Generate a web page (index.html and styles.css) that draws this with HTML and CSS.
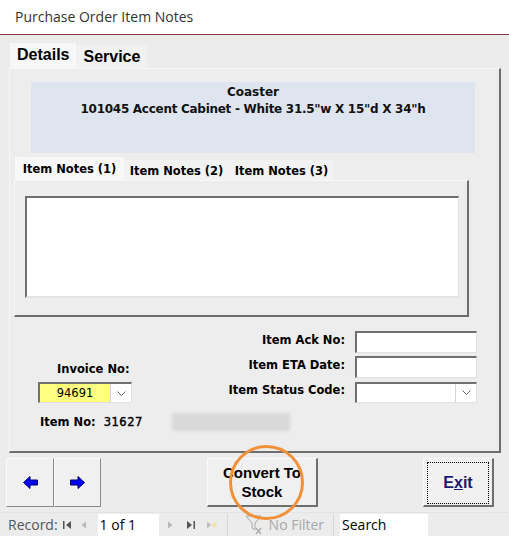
FILE: index.html
```html
<!DOCTYPE html>
<html>
<head>
  <meta charset="UTF-8">
  <title>Purchase Order Item Notes</title>
  <link rel="stylesheet" href="styles.css">
</head>
<body>
  <div class="window">
    <header class="titlebar">Purchase Order Item Notes</header>

    <main class="form">
      <nav class="tabs">
        <span class="tab active">Details</span>
        <span class="tab">Service</span>
      </nav>

      <section class="tab-panel">
        <div class="item-head">
          <div>Coaster</div>
          <div class="item-desc">101045 Accent Cabinet - White 31.5"w X 15"d X 34"h</div>
        </div>

        <nav class="note-tabs">
          <span class="note-tab active">Item Notes (1)</span>
          <span class="note-tab">Item Notes (2)</span>
          <span class="note-tab">Item Notes (3)</span>
        </nav>
        <div class="note-panel">
          <div class="note-box"></div>
        </div>

        <div class="fields">
          <div class="invoice">
            <label class="invoice-label">Invoice No:</label>
            <div class="combo">
              <span class="combo-value yellow">94691</span>
              <span class="combo-btn">
                <svg width="9" height="5" viewBox="0 0 9 5"><path d="M0.5 0.5 L4.5 4.5 L8.5 0.5" fill="none" stroke="#666" stroke-width="1"/></svg>
              </span>
            </div>
          </div>

          <div class="field-grid">
            <label>Item Ack No:</label>
            <div class="textbox"></div>
            <label>Item ETA Date:</label>
            <div class="textbox"></div>
            <label>Item Status Code:</label>
            <div class="combo wide">
              <span class="combo-value"></span>
              <span class="combo-btn">
                <svg width="9" height="5" viewBox="0 0 9 5"><path d="M0.5 0.5 L4.5 4.5 L8.5 0.5" fill="none" stroke="#666" stroke-width="1"/></svg>
              </span>
            </div>
          </div>
        </div>

        <div class="item-no">
          <span>Item No:</span>
          <span class="item-no-value">31627</span>
          <span class="blurred"></span>
        </div>
      </section>

      <div class="actions">
        <div class="nav-buttons">
          <button class="btn nav-btn" title="Previous">
            <svg width="15" height="13" viewBox="0 0 15 13"><polygon points="0.5,6.5 7,0.5 7,4 14.5,4 14.5,9 7,9 7,12.5" fill="#0000ff" stroke="#000066" stroke-width="1"/></svg>
          </button>
          <button class="btn nav-btn" title="Next">
            <svg width="15" height="13" viewBox="0 0 15 13"><polygon points="14.5,6.5 8,0.5 8,4 0.5,4 0.5,9 8,9 8,12.5" fill="#0000ff" stroke="#000066" stroke-width="1"/></svg>
          </button>
        </div>
        <button class="btn convert-btn">Convert To<br>Stock</button>
        <button class="btn exit-btn"><span class="focus-rect">E<u>x</u>it</span></button>
      </div>
    </main>

    <footer class="record-bar">
      <span class="record-label">Record:</span>
      <span class="rec-icon rec-first">
        <svg width="9" height="10" viewBox="0 0 9 10"><rect x="0" y="1" width="1.5" height="8" fill="#555"/><polygon points="8,1 8,9 3,5" fill="#555"/></svg>
      </span>
      <span class="rec-icon rec-prev">
        <svg width="6" height="10" viewBox="0 0 6 10"><polygon points="5,1.5 5,8.5 0.5,5" fill="#b8b8b8"/></svg>
      </span>
      <span class="rec-box">1 of 1</span>
      <span class="rec-icon rec-next">
        <svg width="6" height="10" viewBox="0 0 6 10"><polygon points="1,1.5 1,8.5 5.5,5" fill="#b8b8b8"/></svg>
      </span>
      <span class="rec-icon rec-last">
        <svg width="10" height="10" viewBox="0 0 10 10"><polygon points="1,1 1,9 6,5" fill="#555"/><rect x="7.5" y="1" width="1.5" height="8" fill="#555"/></svg>
      </span>
      <span class="rec-icon rec-new">
        <svg width="11" height="10" viewBox="0 0 11 10"><polygon points="1,1.5 1,8.5 5.5,5" fill="#c0c0c0"/><path d="M8.5 2.5 V7.5 M6 5 H11 M6.8 3.2 L10.2 6.8 M10.2 3.2 L6.8 6.8" stroke="#f3e08a" stroke-width="1"/></svg>
      </span>
      <span class="rec-sep"></span>
      <span class="filter">
        <svg width="22" height="22" viewBox="0 0 22 22"><path d="M1 2 H16 L10 9 V16 L7 14 V9 Z" fill="none" stroke="#a8a8a8" stroke-width="1"/><path d="M11 14 L16 20 M16 14 L11 20" stroke="#a8a8a8" stroke-width="1.2"/></svg>
        No Filter
      </span>
      <span class="rec-sep search-sep"></span>
      <span class="search-box">Search</span>
    </footer>

    <div class="highlight-ring"></div>
  </div>
</body>
</html>
```

FILE: styles.css
```css
body {
  margin: 0;
  background-color: #ececec;
}

.window {
  position: relative;
  width: 509px;
  height: 536px;
  overflow: hidden;
  background-color: #ececec;
  font-family: "DejaVu Sans", sans-serif;
  color: #000;
}

.titlebar {
  height: 34px;
  line-height: 34px;
  padding-left: 15px;
  background-color: #fff;
  border-bottom: 1px solid #8e3946;
  font-family: "Open Sans", sans-serif;
  font-size: 14px;
  color: #333;
}

.form {
  padding-top: 8px;
}

/* top tabs */
.tabs {
  display: flex;
  align-items: flex-end;
  margin-left: 10px;
  height: 25px;
}

.tab {
  font-family: "Liberation Sans", Arial, sans-serif;
  font-weight: bold;
  font-size: 16px;
  padding: 0 7px;
  height: 23px;
  line-height: 23px;
  background-color: #f1f1f1;
}

.tab.active {
  height: 25px;
  line-height: 23px;
  background-color: #f7f7f7;
}

.tab-panel {
  box-sizing: border-box;
  margin-left: 9px;
  width: 492px;
  height: 385px;
  background-color: #ededed;
  border-top: 1px solid #f7f7f7;
  border-left: 1px solid #f7f7f7;
  border-right: 2px solid #6e6e6e;
  border-bottom: 2px solid #6e6e6e;
}

.item-head {
  margin: 13px 24px 0 21px;
  height: 71px;
  padding-top: 2px;
  box-sizing: border-box;
  background-color: #dfe5ee;
  text-align: center;
  font-weight: bold;
  font-size: 12px;
  line-height: 17px;
  color: #111;
}

.item-desc {
  letter-spacing: -0.28px;
}

/* item notes tabs */
.note-tabs {
  display: flex;
  align-items: flex-end;
  margin: 4px 0 0 5px;
  height: 23px;
}

.note-tab {
  box-sizing: border-box;
  width: 105px;
  height: 20px;
  line-height: 22px;
  text-align: center;
  font-weight: bold;
  font-size: 11.5px;
  background-color: #f2f2f2;
}

.note-tab.active {
  width: 109px;
  height: 23px;
  line-height: 25px;
  background-color: #f8f8f8;
}

.note-panel {
  box-sizing: border-box;
  margin-left: 4px;
  width: 455px;
  height: 137px;
  padding: 15px 0 0 10px;
  background-color: #ededed;
  border-top: 1px solid #f8f8f8;
  border-left: 1px solid #f8f8f8;
  border-right: 2px solid #6e6e6e;
  border-bottom: 2px solid #6e6e6e;
}

.note-box {
  box-sizing: border-box;
  width: 434px;
  height: 102px;
  background-color: #fff;
  border-top: 2px solid #6f6f6f;
  border-left: 2px solid #6f6f6f;
  border-right: 1px solid #e3e3e3;
  border-bottom: 2px solid #e3e3e3;
}

/* fields below the notes */
.fields {
  display: flex;
  margin-top: 14px;
}

.invoice {
  margin-left: 28px;
  width: 94px;
  padding-top: 31px;
}

.invoice-label {
  display: block;
  padding-left: 19px;
  height: 20px;
  font-weight: bold;
  font-size: 11.5px;
}

.field-grid {
  margin-left: auto;
  margin-right: 22px;
  display: grid;
  grid-template-columns: auto 122px;
  grid-auto-rows: 22px;
  column-gap: 10px;
  row-gap: 3px;
  align-items: center;
}

.field-grid label {
  text-align: right;
  padding-bottom: 4px;
  font-weight: bold;
  font-size: 11.5px;
}

.textbox,
.combo {
  box-sizing: border-box;
  height: 22px;
  background-color: #fff;
  border-top: 2px solid #707070;
  border-left: 2px solid #707070;
  border-right: 1px solid #e0e0e0;
  border-bottom: 1px solid #e0e0e0;
}

.combo {
  display: flex;
  height: 21px;
  width: 94px;
}

.combo.wide {
  width: 122px;
}

.combo-value {
  flex: 1;
  font-size: 11.5px;
  line-height: 19px;
  text-align: center;
}

.combo-value.yellow {
  background-color: #ffff80;
}

.combo-btn {
  width: 20px;
  display: flex;
  align-items: center;
  justify-content: center;
  background-color: #fff;
  border-left: 1px solid #d4d4d4;
}

.item-no {
  display: flex;
  align-items: center;
  margin: 10px 0 0 30px;
  height: 18px;
  font-weight: bold;
  font-size: 11.5px;
}

.item-no-value {
  margin-left: 8px;
  font-weight: normal;
  letter-spacing: 0.5px;
  -webkit-text-stroke: 0.4px #000;
}

.blurred {
  margin-left: 29px;
  width: 118px;
  height: 18px;
  background-color: #d9d9d9;
  filter: blur(1.5px);
}

/* command buttons */
.actions {
  display: flex;
  margin-top: 5px;
  padding-left: 6px;
  height: 49px;
}

.btn {
  box-sizing: border-box;
  height: 49px;
  margin: 0;
  padding: 0;
  background-color: #f0f0f0;
  border-top: 1px solid #fafafa;
  border-left: 1px solid #fafafa;
  border-right: 2px solid #6e6e6e;
  border-bottom: 2px solid #6e6e6e;
  font-family: "Liberation Sans", Arial, sans-serif;
  font-weight: bold;
  cursor: pointer;
}

.nav-buttons {
  display: flex;
}

.nav-btn {
  width: 48px;
  display: flex;
  align-items: center;
  justify-content: center;
  border-right: 1px solid #8a8a8a;
  border-bottom: 1px solid #8a8a8a;
}

.nav-btn + .nav-btn {
  width: 47px;
}

.convert-btn {
  margin-left: 106px;
  width: 111px;
  font-size: 15px;
  line-height: 19px;
  color: #000;
}

.exit-btn {
  margin-left: 105px;
  width: 71px;
  padding: 3px;
  font-size: 16px;
  color: #1b1b6b;
}

.focus-rect {
  display: flex;
  align-items: center;
  justify-content: center;
  height: 100%;
  border: 1px dotted #000;
}

/* record navigation bar */
.record-bar {
  display: flex;
  align-items: center;
  margin-top: 5px;
  height: 23px;
  border-top: 1px solid #e4e4e4;
  background-color: #ececec;
  font-family: "Open Sans", sans-serif;
  font-size: 14px;
  color: #555;
}

.record-label {
  margin-left: 8px;
}

.rec-icon {
  display: flex;
  align-items: center;
}

.rec-first { margin-left: 5px; }
.rec-prev { margin-left: 9px; }
.rec-next { margin-left: 8px; }
.rec-last { margin-left: 13px; }
.rec-new { margin-left: 10px; }

.rec-box {
  box-sizing: border-box;
  margin-left: 11px;
  width: 61px;
  height: 22px;
  line-height: 22px;
  padding-left: 2px;
  background-color: #fff;
  color: #000;
}

.rec-sep {
  width: 1px;
  height: 22px;
  margin-left: 10px;
  background-color: #d8d8d8;
}

.filter {
  display: flex;
  align-items: center;
  gap: 2px;
  margin-left: 17px;
  color: #a8a8a8;
}

.search-sep {
  margin-left: 9px;
}

.search-box {
  box-sizing: border-box;
  margin-left: 6px;
  width: 88px;
  height: 22px;
  line-height: 22px;
  padding-left: 2px;
  background-color: #fff;
  color: #000;
}

/* orange annotation ring */
.highlight-ring {
  position: absolute;
  left: 229px;
  top: 445px;
  width: 75px;
  height: 75px;
  box-sizing: border-box;
  border: 3px solid #f0913a;
  border-radius: 50%;
}
```
